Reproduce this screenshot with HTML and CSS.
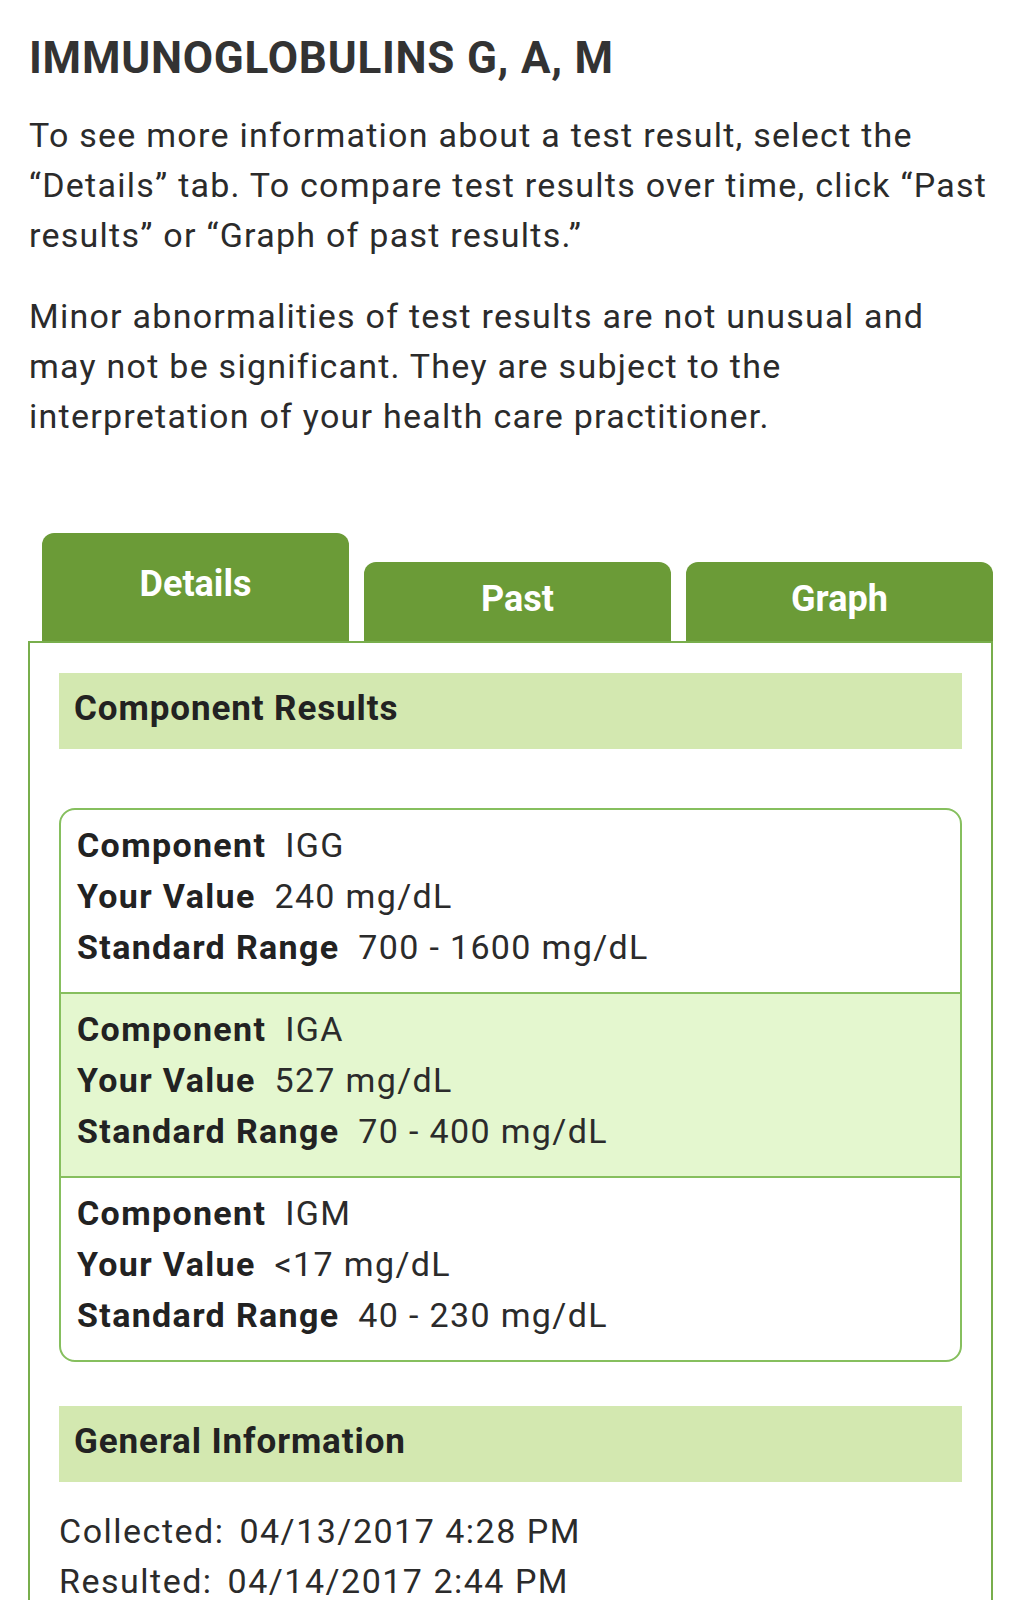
FILE: index.html
```html
<!DOCTYPE html>
<html lang="en">
<head>
<meta charset="utf-8">
<title>Immunoglobulins G, A, M</title>
<link rel="stylesheet" href="styles.css">
</head>
<body>
<div class="page">
  <h1 class="title">IMMUNOGLOBULINS G, A, M</h1>
  <p class="intro">To see more information about a test result, select the “Details” tab. To compare test results over time, click “Past results” or “Graph of past results.”</p>
  <p class="intro intro-second">Minor abnormalities of test results are not unusual and may not be significant. They are subject to the interpretation of your health care practitioner.</p>

  <div class="tabs">
    <div class="tab tab-active">Details</div>
    <div class="tab">Past</div>
    <div class="tab">Graph</div>
  </div>
  <div class="panel">
    <h2 class="section-bar">Component Results</h2>
    <div class="results">
      <div class="result">
        <div class="line"><span class="label">Component</span> IGG</div>
        <div class="line"><span class="label">Your Value</span> 240 mg/dL</div>
        <div class="line"><span class="label">Standard Range</span> 700 - 1600 mg/dL</div>
      </div>
      <div class="result result-alt">
        <div class="line"><span class="label">Component</span> IGA</div>
        <div class="line"><span class="label">Your Value</span> 527 mg/dL</div>
        <div class="line"><span class="label">Standard Range</span> 70 - 400 mg/dL</div>
      </div>
      <div class="result">
        <div class="line"><span class="label">Component</span> IGM</div>
        <div class="line"><span class="label">Your Value</span> &lt;17 mg/dL</div>
        <div class="line"><span class="label">Standard Range</span> 40 - 230 mg/dL</div>
      </div>
    </div>
    <h2 class="section-bar section-general">General Information</h2>
    <div class="info">
      <div class="info-line"><span class="info-label">Collected:</span> 04/13/2017 4:28 PM</div>
      <div class="info-line"><span class="info-label">Resulted:</span> 04/14/2017 2:44 PM</div>
    </div>
  </div>
</div>
</body>
</html>
```
FILE: styles.css
```css
html, body {
  margin: 0;
  padding: 0;
  background: #ffffff;
}

body {
  font-family: Roboto, "Noto Sans", "Liberation Sans", sans-serif;
  color: #2b2b2b;
}

.page {
  padding: 32px 28px 0 28px;
}

.title {
  margin: 0 0 0 1px;
  font-size: 44px;
  line-height: 52px;
  font-weight: 700;
  letter-spacing: 0.75px;
  color: #333333;
}

.intro {
  margin: 26px 4px 0 1px;
  font-size: 34px;
  line-height: 50px;
  font-weight: 400;
  letter-spacing: 1.25px;
  color: #2b2b2b;
}

.intro-second {
  margin-top: 31px;
}

.tabs {
  display: flex;
  align-items: flex-end;
  gap: 15px;
  margin-top: 92px;
  padding-left: 14px;
}

.tab {
  flex: 1;
  background: #6b9b37;
  color: #ffffff;
  font-size: 36px;
  line-height: 44px;
  font-weight: 700;
  text-align: center;
  padding: 15px 0 20px;
  border-radius: 12px 12px 0 0;
}

.tab-active {
  padding: 29px 0 35px;
}

.panel {
  border: 2px solid #78ae4c;
  border-bottom: none;
  padding: 30px 29px 0 29px;
}

.section-bar {
  margin: 0;
  background: #d3e8b0;
  height: 76px;
  box-sizing: border-box;
  display: flex;
  align-items: center;
  padding: 0 15px 5px;
  font-size: 35px;
  font-weight: 700;
  letter-spacing: 0.9px;
  color: #222222;
}

.results {
  margin-top: 59px;
  border: 2px solid #86bf5e;
  border-radius: 16px;
  overflow: hidden;
}

.result {
  padding: 10px 16px 19px;
}

.result + .result {
  border-top: 2px solid #86bf5e;
}

.result-alt {
  background: #e4f7cf;
}

.line {
  font-size: 34px;
  line-height: 51px;
  letter-spacing: 1.35px;
  color: #2b2b2b;
}

.label {
  font-weight: 700;
  color: #222222;
  margin-right: 9px;
}

.section-general {
  margin-top: 44px;
}

.info {
  margin-top: 24px;
}

.info-line {
  font-size: 34px;
  line-height: 50px;
  letter-spacing: 1.5px;
  color: #2b2b2b;
}

.info-label {
  margin-right: 5px;
}
```
